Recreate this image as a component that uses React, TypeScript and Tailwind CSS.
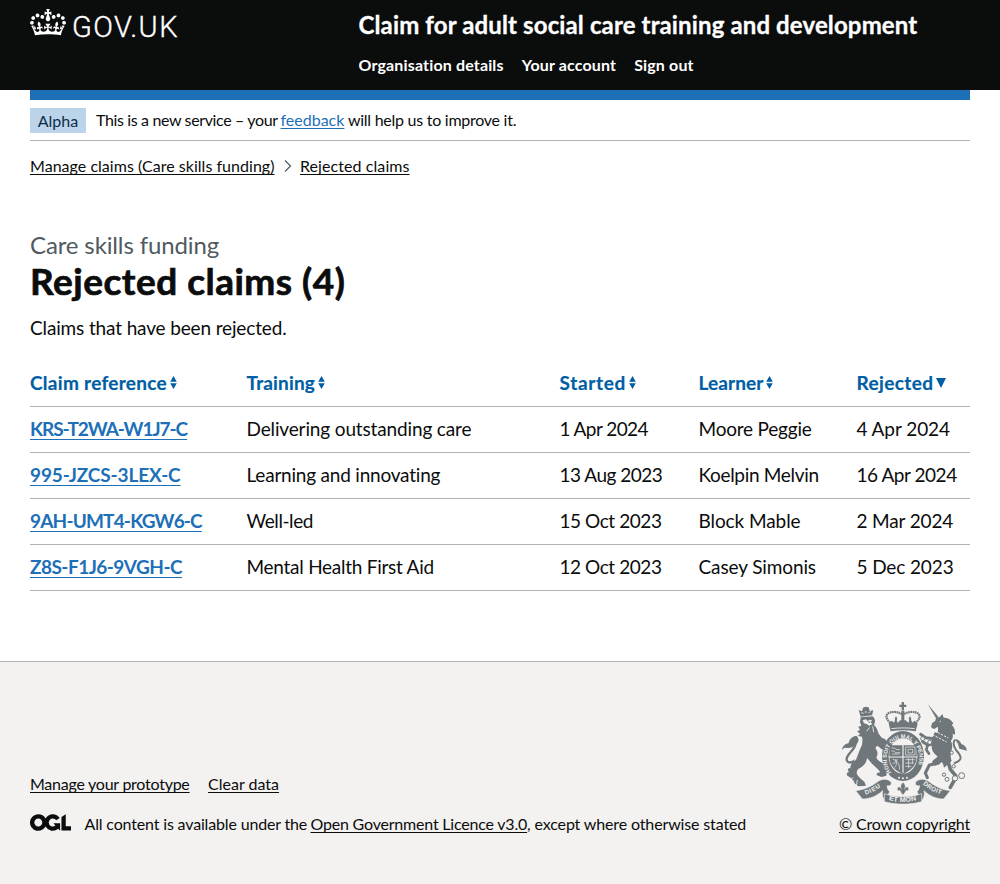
import type { ReactNode } from "react";

const link = "underline decoration-1 [text-decoration-skip-ink:none]";

function Crown() {
  return (
    <svg viewBox="0 0 132 97" className="mt-[9px] h-[26.5px] w-9 shrink-0" fill="#fff" aria-hidden="true">
      <path d="M25 30.2c3.5 1.5 7.7-.2 9.1-3.7 1.5-3.6-.2-7.8-3.9-9.2-3.6-1.4-7.6.3-9.1 3.9-1.4 3.5.3 7.5 3.9 9zM9 39.5c3.6 1.5 7.8-.2 9.2-3.7 1.5-3.6-.2-7.8-3.9-9.1-3.6-1.5-7.6.2-9.1 3.8-1.4 3.5.3 7.5 3.8 9zM4.4 57.2c3.5 1.5 7.7-.2 9.1-3.8 1.5-3.6-.2-7.7-3.9-9.1-3.5-1.5-7.6.3-9.1 3.8-1.4 3.5.3 7.6 3.9 9.1zm38.3-21.4c3.5 1.5 7.7-.2 9.1-3.8 1.5-3.6-.2-7.7-3.9-9.1-3.6-1.5-7.6.3-9.1 3.8-1.3 3.6.4 7.7 3.9 9.1zm64.4-5.6c-3.6 1.5-7.8-.2-9.1-3.7-1.5-3.6.2-7.8 3.8-9.2 3.6-1.4 7.7.3 9.2 3.9 1.3 3.5-.4 7.5-3.9 9zm15.9 9.3c-3.6 1.5-7.7-.2-9.1-3.7-1.5-3.6.2-7.8 3.7-9.1 3.6-1.5 7.7.2 9.2 3.8 1.5 3.5-.3 7.5-3.8 9zm4.7 17.7c-3.6 1.5-7.8-.2-9.2-3.8-1.5-3.6.2-7.7 3.9-9.1 3.6-1.5 7.7.3 9.2 3.8 1.3 3.5-.4 7.6-3.9 9.1zM89.3 35.8c-3.6 1.5-7.8-.2-9.2-3.8-1.4-3.6.2-7.7 3.9-9.1 3.6-1.5 7.7.3 9.2 3.8 1.4 3.6-.3 7.7-3.9 9.1zM69.7 17.7l8.9 4.7V9.3l-8.9 2.8c-.2-.3-.5-.6-.9-.9L72.4 0H59.6l3.5 11.2c-.3.3-.6.5-.9.9l-8.8-2.8v13.1l8.8-4.7c.3.3.6.7.9.9l-5 15.4v.1c-.2.8-.4 1.6-.4 2.4 0 4.1 3.1 7.5 7 8.1h.2c.3 0 .7.1 1 .1.4 0 .7 0 1-.1h.2c4-.6 7.1-4.1 7.1-8.1 0-.8-.1-1.7-.4-2.4V34l-5.1-15.4c.4-.2.7-.6 1-.9zM66 92.8c16.9 0 32.8 1.1 47.1 3.2 4-16.9 8.9-26.7 14-33.5l-9.6-3.4c1 4.9 1.1 7.2 0 10.2-1.5-1.4-3-4.3-4.2-8.7L108.6 76c2.8-2 5-3.2 7.5-3.3-4.4 9.4-10 11.9-13.6 11.2-4.3-.8-6.3-4.6-5.6-7.9 1-4.7 5.7-5.9 8-.5 4.3-8.7-3-11.4-7.6-8.8 7.1-7.2 7.9-13.5 2.1-21.1-8 6.1-8.1 12.3-4.5 20.8-4.7-5.4-12.1-2.5-9.5 6.2 3.4-5.2 7.9-2 7.2 3.1-.6 4.3-6.4 7.8-13.5 7.2-10.3-.9-10.9-8-11.2-13.8 2.5-.5 7.1 1.8 11 7.3L80.2 60c-4.1 4.4-8 5.3-12.3 5.4 1.4-4.4 8-11.6 8-11.6H55.5s6.4 7.2 7.9 11.6c-4.2-.1-8-1-12.3-5.4l1.4 16.4c3.9-5.5 8.5-7.7 10.9-7.3-.3 5.8-.9 12.8-11.1 13.8-7.2.6-12.9-2.9-13.5-7.2-.7-5 3.8-8.3 7.1-3.1 2.7-8.7-4.6-11.6-9.4-6.2 3.7-8.5 3.6-14.7-4.6-20.8-5.8 7.6-5 13.9 2.2 21.1-4.7-2.6-11.9.1-7.7 8.8 2.3-5.5 7.1-4.2 8.1.5.7 3.3-1.3 7.1-5.7 7.9-3.5.7-9-1.8-13.5-11.2 2.5.1 4.7 1.3 7.5 3.3l-4.7-15.4c-1.2 4.4-2.7 7.2-4.3 8.7-1.1-3-.9-5.3 0-10.2l-9.5 3.4c5 6.9 9.9 16.7 14 33.5 14.8-2.1 30.8-3.2 47.7-3.2z" />
    </svg>
  );
}

function OglLogo() {
  return (
    <svg viewBox="0 0 483.2 195.7" className="mt-[5px] h-[17px] w-[41px] shrink-0" fill="#0b0c0c" aria-hidden="true">
      <path d="M421.5 142.8V.1l-50.7 32.3v161.1h112.4v-50.7zm-122.3-9.6A47.12 47.12 0 0 1 221 97.8c0-26 21.1-47.1 47.1-47.1 16.7 0 31.4 8.7 39.7 21.8l42.7-27.2A97.63 97.63 0 0 0 268.1 0c-36.5 0-68.3 20.1-85.1 49.7A98 98 0 0 0 97.8 0C43.9 0 0 43.9 0 97.8s43.9 97.8 97.8 97.8c36.5 0 68.3-20.1 85.1-49.7a97.76 97.76 0 0 0 149.6 25.4l19.4 22.2h3v-87.8h-80l24.3 27.5zM97.8 145c-26 0-47.1-21.1-47.1-47.1s21.1-47.1 47.1-47.1 47.1 21.1 47.1 47.1S123.8 145 97.8 145" />
    </svg>
  );
}

function RoyalArms() {
  const ink = "#6f777b";
  const paper = "#f3f2f1";
  return (
    <svg viewBox="36 36 375 306" className="h-[102px] w-[125px]" fill={ink} aria-hidden="true">
      {/* lion */}
      <path d="M86 60l10 4 3-11 8-3 9 2 3 11 11-2-4 15-34 4z" />
      <path d="M94 68l7 2M104 66h7M115 68l7-3" stroke={paper} strokeWidth="2.5" />
      <path d="M92 82l36-3c4 5 8 9 7 16l-3 10c8 6 10 15 14 26l10 13c8 1 13 5 14 11l-6 9c6 7 2 14-3 15-9-1-12-9-20-12l-5 8c8 9 8 18 3 28 6 12 22 14 29 29 6 10 1 16 1 25l-14 4-14-5c-4-5 2-9 10-8-4-9-13-14-20-22-9-8-14-16-20-22-2 14-8 23-21 30-9 4-11 11-9 19 5 8 12 14 22 22l5 12-23 2c-10-5-15-14-20-24l-13-8c-4-6 0-11 5-11-6-6-4-12 4-12 0-12 7-18 17-24 3-14 8-25 15-38 5-12 5-21 3-32l-12-2 6-7-9-7 9-4-5-10 9-3-4-10z" />
      <path d="M77 211C52 226 44 211 55 195c14-17 24-27 22-42" fill="none" stroke={ink} strokeWidth="7" />
      <path d="M79 137c10 8 8 20-2 27-8 9-20 11-30 9-6-1-9 5-11 7 2-15 12-18 20-21 2-10 8-19 23-22z" />
      <path d="M98 91l10-3 4 5 8-4 6 2-4 6 5 5-9 5-8-5-8-2z" fill={paper} />
      <path d="M114 94l7 1-3 5z" />
      <path d="M87 179c-3 14-7 24-14 34M119 112l-9 12M128 109l3 18M70 262l-9 9M71 271l-4 12M82 270l-3 18" fill="none" stroke={paper} strokeWidth="2.5" />
      {/* unicorn */}
      <path d="M293 42l32 38-6 6z" />
      <path d="M318 84l12-4 7-8 4 11c15 0 25 8 29 18l-5 3c9 8 11 18 10 30l-7-3c2 9 0 15-6 22l-42-20c5-9 5-16 3-23-5 4-9 7-14 6l-6-5 3-11 10-8z" />
      <path d="M315 126l44 22c8 9 9 20 6 32-4 12-4 22 0 33l-23 20c-2-14-11-27-22-36-12-9-16-20-15-34-1-13 3-26 10-37z" />
      <g fill="none" stroke={ink} strokeLinejoin="round" strokeLinecap="round">
        <path d="M312 146l-25-3-15-10" strokeWidth="9" />
        <path d="M311 161l-18 4-15-10" strokeWidth="9" />
        <path d="M293 165l-4 14 8 12" strokeWidth="8" />
        <path d="M341 205l-17 15-26 5-12 24 6 14" strokeWidth="9" />
        <path d="M336 201l-20 16" strokeWidth="18" />
        <path d="M354 214l7 24 16 19-6 17-10 18" strokeWidth="11" />
        <path d="M374 219c27-9 19-22 4-39-8-11-9-19-5-28" strokeWidth="6" />
      </g>
      <path d="M313 122l42 22M307 134l43 22" fill="none" stroke={paper} strokeWidth="3" strokeDasharray="7 4" />
      <circle cx="331" cy="94" r="2" fill={paper} />
      <path d="M371 148c15 9 14 20 17 28l23 6c-2-13-9-17-17-20-3-9-10-16-23-14z" />
      <g fill={paper} stroke={ink} strokeWidth="3">
        <circle cx="342" cy="254" r="5" /><circle cx="351" cy="268" r="6" /><circle cx="375" cy="265" r="8" /><circle cx="395" cy="257" r="9" />
        <circle cx="365" cy="188" r="5" /><circle cx="371" cy="229" r="5" /><circle cx="278" cy="146" r="6" /><circle cx="299" cy="157" r="6" />
      </g>
      {/* crown */}
      <path d="M215 36h7v8h7v7h-7v10h-7V51h-7v-7h7z" />
      <path d="M181 98c-24-21-6-32 8-32 14-1 22 4 30 8 8-4 16-9 30-8 14 0 32 11 8 32" fill="none" stroke={ink} strokeWidth="6.5" strokeDasharray="5 1.5" />
      <path d="M214 62h9v43h-9z" />
      <path d="M176 101l10-9 6 6 5-13 6 13 10-9 6 6 6-6 10 9 6-13 6 13 6-6 10 9-6 23c-25-4-50-4-75 0z" />
      <path d="M184 116c24-3 47-3 70 0" fill="none" stroke={paper} strokeWidth="2.5" />
      <path d="M198 78l4 8-4 9-4-9zM240 78l4 8-4 9-4-9z" />
      {/* garter and shield */}
      <ellipse cx="219" cy="198" rx="63" ry="75" />
      <ellipse cx="219" cy="198" rx="43" ry="53" fill={paper} />
      <path d="M178 166h82v34c-1 27-16 41-41 52-25-11-40-25-41-52z" />
      <path d="M219 161v87M176 201h86" stroke={paper} strokeWidth="3.5" />
      <g stroke={paper} strokeWidth="2" fill="none">
        <path d="M184 174h10l4 5h12M184 183h8l4 5h15M186 192h23M227 171h28v24h-28zM234 178h14v11h-14zM226 209h28M226 219h24M226 229h18M236 205v30M248 205v17M188 207c14 7 23 17 20 32M195 207c6 9 6 20-2 25M202 207c-3 10-9 14-14 13" />
      </g>
      <defs>
        <path id="garter" d="M184 247A49 60 0 1 1 254 247" />
        <path id="left-scroll" d="M106 314Q138 305 160 283" />
        <path id="mid-scroll" d="M176 330Q219 342 262 330" />
        <path id="right-scroll" d="M278 283Q304 305 338 315" />
      </defs>
      <text fill={paper} fontFamily="Liberation Sans, sans-serif" fontWeight="700" fontSize="17">
        <textPath href="#garter" textLength="236" lengthAdjust="spacingAndGlyphs">HONI SOIT QUI MAL Y PENSE</textPath>
      </text>
      <g stroke={paper} strokeWidth="2">
        <path d="M77 302c21-2 45-11 63-25 15-12 33-12 43-1 4 8-5 14-12 11 1 7 3 14 8 18l-13 28c-8-8-11-19-8-31-17 16-38 25-61 25z" />
        <path d="M361 302c-21-2-43-11-61-25-15-12-33-12-43-1-4 8 5 14 12 11-1 7-3 14-8 18l13 28c8-8 11-19 8-31 17 16 36 25 59 25z" />
        <path d="M163 311c36 12 76 12 112 0v24c-36 10-76 10-112 0z" />
      </g>
      <g fill={paper} fontFamily="Liberation Sans, sans-serif" fontWeight="700" fontSize="19">
        <text><textPath href="#left-scroll" textLength="52">DIEU</textPath></text>
        <text fontSize="21"><textPath href="#mid-scroll" textLength="84">ET MON</textPath></text>
        <text><textPath href="#right-scroll" textLength="62">DROIT</textPath></text>
      </g>
      <path d="M219 277c8 7 8 14 4 21 3-9 12-9 13-2 0 6-5 8-8 5-2 6-5 10-9 14-4-4-7-8-9-14-3 3-8 1-8-5 1-7 10-7 13 2-4-7-4-14 4-21z" stroke={paper} strokeWidth="1" />
      <g fill={paper}><circle cx="207" cy="263" r="3" /><circle cx="219" cy="265" r="3" /><circle cx="231" cy="263" r="3" /></g>
    </svg>
  );
}

function SortIcon({ active }: { active?: boolean }) {
  return active ? (
    <svg viewBox="0 0 10 10" className="ml-[2.5px] h-2.5 w-2.5" fill="#005ea5"><path d="M0 0h10L5 10z" /></svg>
  ) : (
    <svg viewBox="0 0 7 13" className="ml-[2.5px] h-[13px] w-[7px]" fill="#005ea5"><path d="M3.5 0L6.8 5.7H.2zM.2 7.3h6.6L3.5 13z" /></svg>
  );
}

const headings = [
  { text: "Claim reference", fit: "w-[137px] tracking-[0.29px]" },
  { text: "Training", fit: "w-[68.5px] tracking-[0.16px]" },
  { text: "Started", fit: "w-[66.5px] tracking-[0.68px]" },
  { text: "Learner", fit: "w-[65px] tracking-[0.11px]" },
  { text: "Rejected", fit: "w-[77px] tracking-[0.4px]" },
];

const rows: [string, string][][] = [
  [["KRS-T2WA-W1J7-C", "tracking-[-1.05px]"], ["Delivering outstanding care", "tracking-[-0.14px]"], ["1 Apr 2024", "tracking-[-0.57px]"], ["Moore Peggie", "tracking-[-0.21px]"], ["4 Apr 2024", "tracking-[-0.07px]"]],
  [["995-JZCS-3LEX-C", "tracking-[-0.12px]"], ["Learning and innovating", "tracking-[-0.21px]"], ["13 Aug 2023", "tracking-[-0.5px]"], ["Koelpin Melvin", "tracking-[-0.32px]"], ["16 Apr 2024", "tracking-[-0.45px]"]],
  [["9AH-UMT4-KGW6-C", "tracking-[-0.82px]"], ["Well-led", "tracking-[-0.41px]"], ["15 Oct 2023", "tracking-[-0.44px]"], ["Block Mable", "tracking-[-0.08px]"], ["2 Mar 2024", "tracking-[-0.15px]"]],
  [["Z8S-F1J6-9VGH-C", "tracking-[-0.53px]"], ["Mental Health First Aid", "tracking-[-0.26px]"], ["12 Oct 2023", "tracking-[-0.44px]"], ["Casey Simonis", "tracking-[-0.11px]"], ["5 Dec 2023", "tracking-[-0.12px]"]],
];

const grid = "grid grid-cols-[216.5px_313px_139px_158px_113.5px]";

function Cell({ children }: { children: ReactNode }) {
  return <div className="flex h-[46px] items-center whitespace-nowrap border-b border-[#b1b4b6] pb-0.5">{children}</div>;
}

export default function App() {
  return (
    <div className="flex h-[884px] w-[1000px] flex-col bg-white font-[Lato,sans-serif] text-[#0b0c0c]">
      <header className="flex h-[90px] shrink-0 bg-[#0b0c0c] px-[30px] text-white">
        <div className="flex w-[328.5px] items-start">
          <Crown />
          <span className="ml-[6px] mt-[9px] font-[Roboto] text-[29px] font-light leading-9 tracking-[1.45px] [-webkit-text-stroke:0.35px_#fff]">GOV.UK</span>
        </div>
        <div className="whitespace-nowrap font-bold">
          <div className="mt-[10px] text-2xl leading-[30px] tracking-[0.13px] [-webkit-text-stroke:0.3px_#fff]">Claim for adult social care training and development</div>
          <nav className="mt-[15px] flex gap-[18px] text-base leading-5 tracking-[0.15px]">
            <a>Organisation details</a>
            <a>Your account</a>
            <a>Sign out</a>
          </nav>
        </div>
      </header>
      <main className="mx-[30px] h-[571px] shrink-0">
        <div className="h-2.5 bg-[#1d70b8]" />
        <div className="flex h-[41px] items-center gap-2.5 border-b border-[#b1b4b6] text-base leading-5">
          <span className="h-[25px] w-14 bg-[#bbd4ea] text-center leading-[25px] text-[#0c2d4a]">Alpha</span>
          <span className="flex whitespace-nowrap">
            <span className="w-[184.5px] tracking-[-0.36px]">This is a new service – your</span>
            <a className={`text-[#1d70b8] underline-offset-[2px] ${link}`}>feedback</a>
            <span className="ml-[3.5px] tracking-[-0.26px]">will help us to improve it.</span>
          </span>
        </div>
        <nav className="mt-[15px] flex items-center whitespace-nowrap text-base leading-5">
          <a className={`w-[244.5px] tracking-[0.03px] underline-offset-[2px] ${link}`}>Manage claims (Care skills funding)</a>
          <svg viewBox="0 0 8 12" className="ml-[9px] mr-[8.5px] h-3 w-2" fill="none" stroke="#505a5f" strokeWidth="1.2"><path d="M1 .5L6.5 6 1 11.5" /></svg>
          <a className={`tracking-[0.08px] underline-offset-[2px] ${link}`}>Rejected claims</a>
        </nav>
        <div className="mt-[54px] text-2xl leading-[30px] tracking-[-0.13px] text-[#505a5f]">Care skills funding</div>
        <h1 className="mt-px text-[37px] font-bold leading-10 tracking-[0.5px] [-webkit-text-stroke:0.7px_#0b0c0c]">Rejected claims (4)</h1>
        <p className="mt-[14px] text-[19px] leading-[25px] tracking-[-0.14px]">Claims that have been rejected.</p>
        <div className="mt-[21px] text-[19px] leading-[25px]">
          <div className={grid}>
            {headings.map((h, i) => (
              <Cell key={h.text}>
                <span className={`font-bold text-[#005ea5] [-webkit-text-stroke:0.2px_#005ea5] ${h.fit}`}>{h.text}</span>
                <SortIcon active={i === 4} />
              </Cell>
            ))}
          </div>
          {rows.map((row) => (
            <div key={row[0][0]} className={grid}>
              {row.map(([text, fit], i) => (
                <Cell key={text}>
                  {i === 0 ? <a className={`font-bold text-[#1d70b8] underline-offset-[3px] ${link} ${fit}`}>{text}</a> : <span className={fit}>{text}</span>}
                </Cell>
              ))}
            </div>
          ))}
        </div>
      </main>
      <footer className="flex flex-1 justify-between border-t border-[#b1b4b6] bg-[#f3f2f1] px-[30px] text-base leading-5">
        <div className="pt-[112px]">
          <div className="flex gap-[18.5px]">
            <a className={`tracking-[-0.25px] underline-offset-[2px] ${link}`}>Manage your prototype</a>
            <a className={`underline-offset-[2px] ${link}`}>Clear data</a>
          </div>
          <div className="mt-[15px] flex whitespace-nowrap">
            <OglLogo />
            <p className="ml-[13.5px] mt-[5px] flex">
              <span className="w-[226px] tracking-[-0.16px]">All content is available under the</span>
              <a className={`tracking-[-0.2px] underline-offset-[2px] ${link}`}>Open Government Licence v3.0</a>
              <span className="tracking-[-0.14px]">, except where otherwise stated</span>
            </p>
          </div>
        </div>
        <div className="flex flex-col items-end pt-10">
          <div className="mr-[3px]"><RoyalArms /></div>
          <a className={`mt-[10px] tracking-[-0.19px] underline-offset-[2px] ${link}`}>© Crown copyright</a>
        </div>
      </footer>
    </div>
  );
}
